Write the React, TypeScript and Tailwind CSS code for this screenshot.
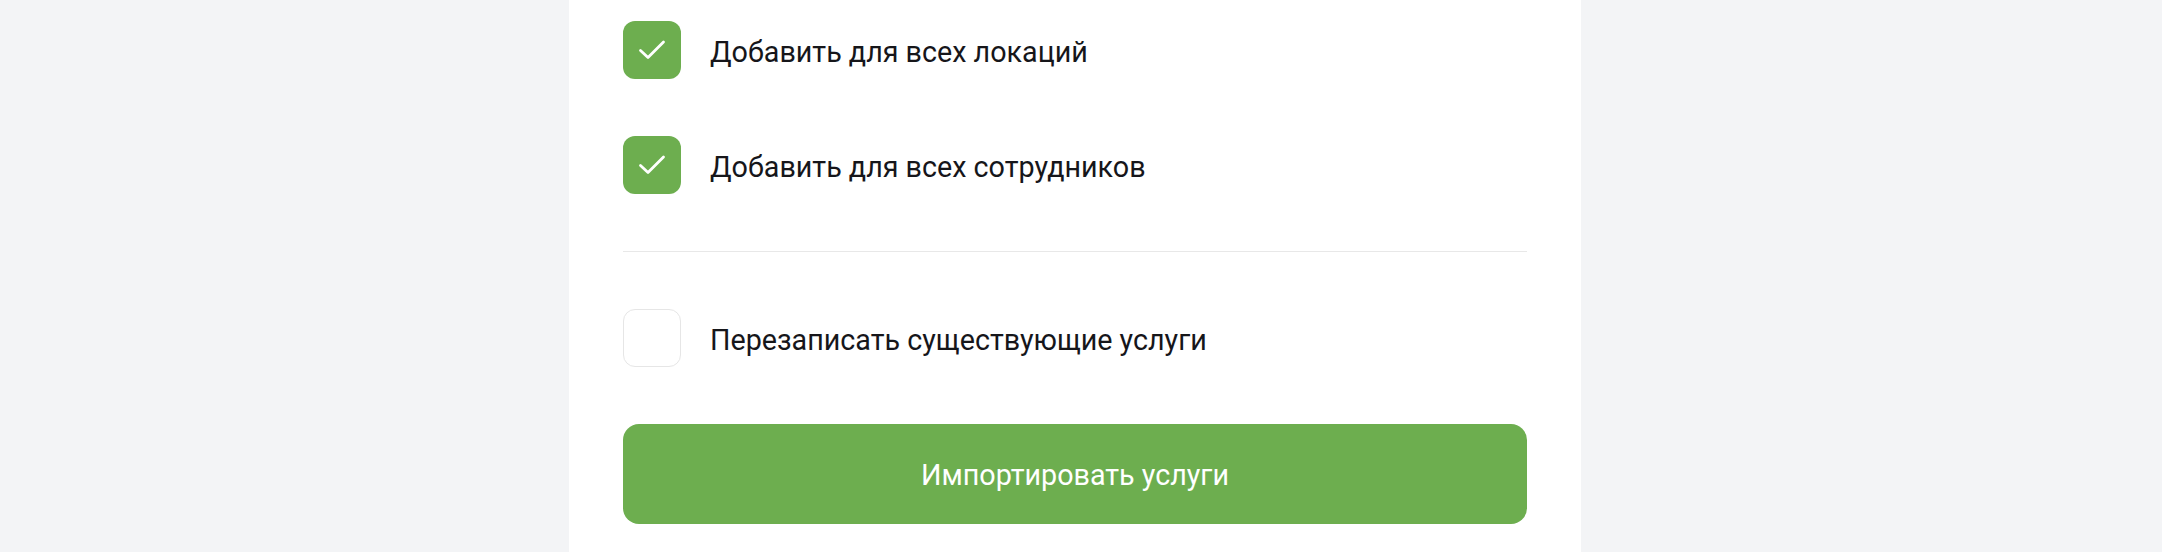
import React from "react";

function Check() {
  return (
    <svg width="28" height="22" viewBox="0 0 28 22" fill="none">
      <path d="M2.5 11.5 L10 18.5 L25.5 3" stroke="white" strokeWidth="2.8" strokeLinecap="round" strokeLinejoin="round" />
    </svg>
  );
}

function Row({ checked, label }: { checked: boolean; label: string }) {
  return (
    <div className="flex items-center gap-[29px]">
      {checked ? (
        <div className="w-[58px] h-[58px] rounded-[12px] bg-[#6dae4f] flex items-center justify-center shrink-0">
          <Check />
        </div>
      ) : (
        <div className="w-[58px] h-[58px] rounded-[12px] bg-white border border-[#e6e6e6] shrink-0" />
      )}
      <span className="text-[28.7px] leading-none text-[#16161a] mt-[4px]">{label}</span>
    </div>
  );
}

export default function App() {
  return (
    <div className="w-full h-[552px] bg-[#f3f4f6] flex overflow-hidden" style={{ fontFamily: "Roboto, 'Noto Sans', sans-serif" }}>
      <div className="ml-[569px] w-[1012px] h-full bg-white pl-[54px] pr-[54px] pt-[21px] flex flex-col gap-[57px]">
        <Row checked label="Добавить для всех локаций" />
        <Row checked label="Добавить для всех сотрудников" />
        <div className="h-px bg-[#e8e8e8]" />
        <Row checked={false} label="Перезаписать существующие услуги" />
        <button className="h-[100px] w-full rounded-[16px] bg-[#6dae4f] text-white text-[28.7px] leading-none flex items-center justify-center">
          <span className="mt-[2px]">Импортировать услуги</span>
        </button>
      </div>
    </div>
  );
}
